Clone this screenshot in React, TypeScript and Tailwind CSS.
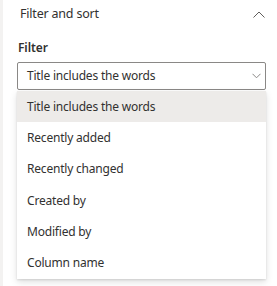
import React from 'react';

const options = [
    'Title includes the words',
    'Recently added',
    'Recently changed',
    'Created by',
    'Modified by',
    'Column name',
];

const App: React.FC = () => {
    return (
        <div className="w-[277px] h-[286px] bg-white border-l-[3px] border-[#f3f2f1] text-[#323130] font-['Noto_Sans',sans-serif] overflow-hidden">
            <div className="pl-[14px] pr-[9px]">
                {/* Header */}
                <div className="flex items-center justify-between h-[28px] pl-[3px] pr-[3px]">
                    <span className="text-[12.5px] tracking-[-0.2px]">Filter and sort</span>
                    <svg width="12" height="7" viewBox="0 0 12 7" fill="none">
                        <path d="M0.5 6.5 L6 1 L11.5 6.5" stroke="#605e5c" strokeWidth="1" />
                    </svg>
                </div>

                <div className="mt-[10px] pl-[1px] text-[12px] font-semibold leading-[20px] tracking-[-0.1px]">Filter</div>

                {/* Dropdown */}
                <div className="mt-[4px] w-[249px]">
                    <div className="flex items-center justify-between h-[28px] pl-[9px] pr-[4px] border border-[#8a8886] rounded-[2px]">
                        <span className="text-[12px] tracking-[-0.2px]">Title includes the words</span>
                        <svg width="9" height="6" viewBox="0 0 9 6" fill="none">
                            <path d="M0.5 0.8 L4.5 4.8 L8.5 0.8" stroke="#8a8886" strokeWidth="1" />
                        </svg>
                    </div>
                    <div className="mt-[1px] bg-white shadow-[0_3px_7px_rgba(0,0,0,0.13),0_0.6px_1.8px_rgba(0,0,0,0.11)]">
                        {options.map((opt, i) => (
                            <div
                                key={opt}
                                className={`flex items-center h-[31.33px] px-[10px] text-[12px] tracking-[-0.2px] ${i === 0 ? 'bg-[#edebe9]' : ''}`}
                            >
                                {opt}
                            </div>
                        ))}
                    </div>
                </div>
            </div>
        </div>
    );
};

export default App;
